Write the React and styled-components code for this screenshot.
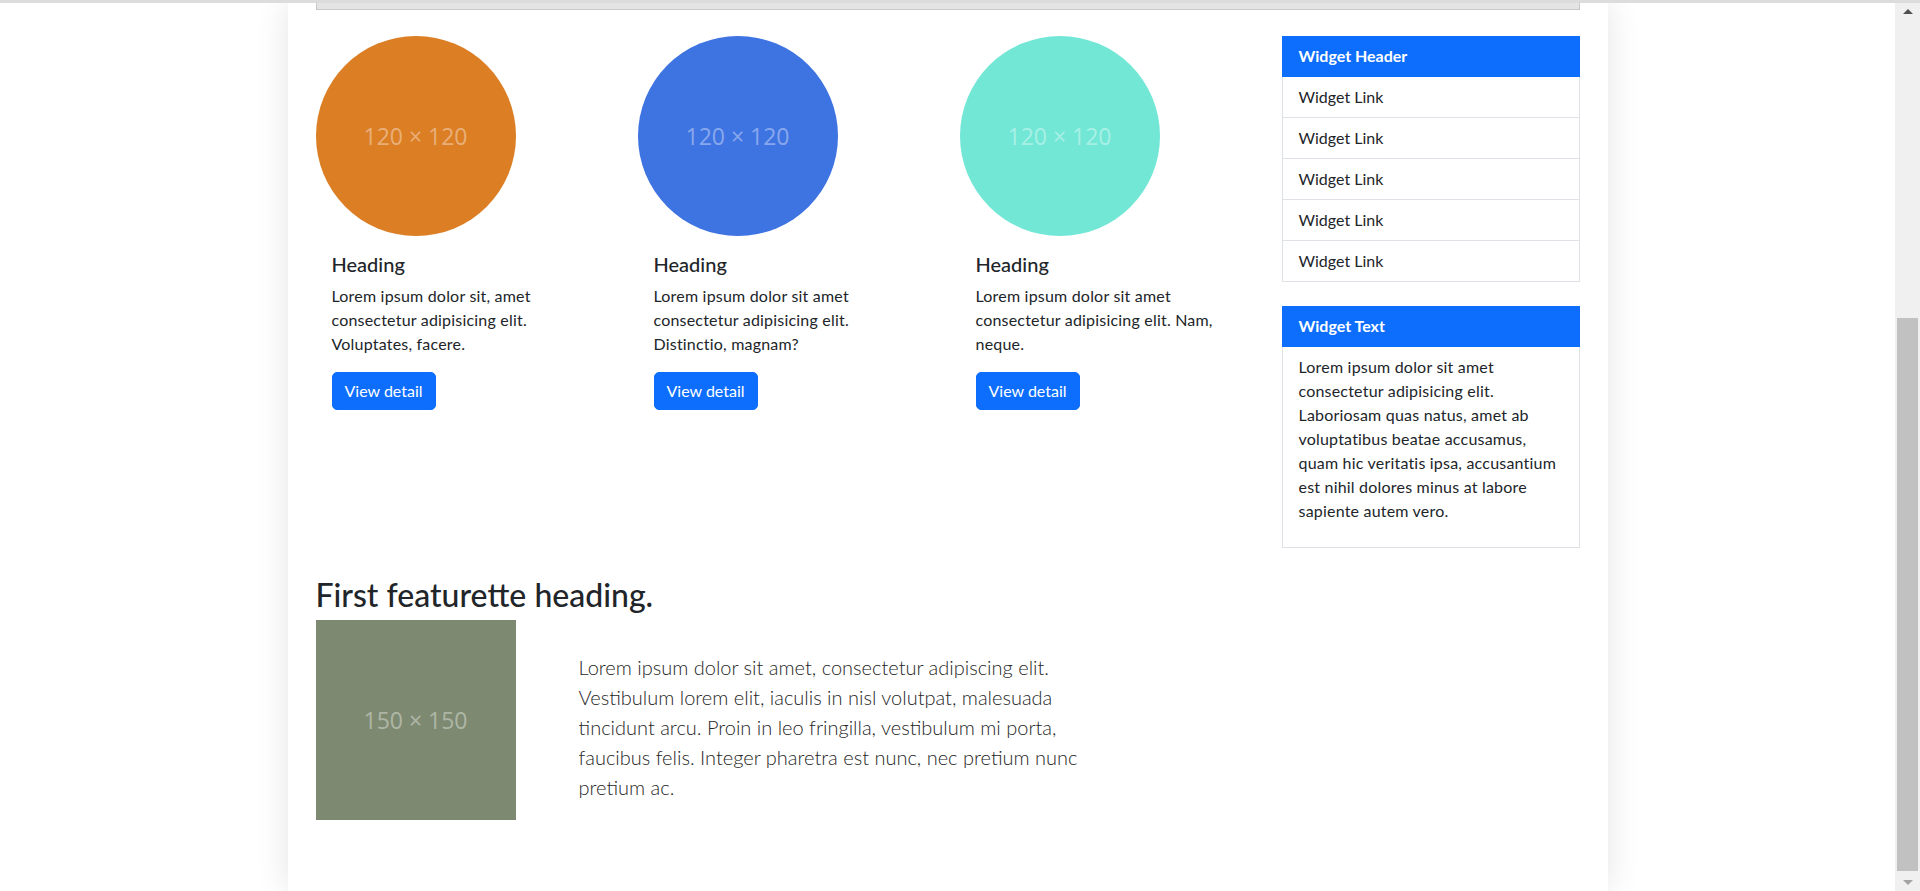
import React from 'react';
import styled, { createGlobalStyle } from 'styled-components';

const GlobalStyle = createGlobalStyle`
  html, body {
    margin: 0;
    height: 100%;
    overflow: hidden;
    background: #fff;
  }
  body {
    font-family: Lato, "Noto Sans", sans-serif;
    color: #212529;
  }
  * {
    box-sizing: border-box;
  }
`;

const Screen = styled.div`
  display: flex;
  flex-direction: column;
  height: 100vh;
`;

const TopEdge = styled.div`
  height: 3px;
  background: #dcdcdc;
  flex-shrink: 0;
`;

const Viewport = styled.div`
  flex: 1;
  min-height: 0;
  display: flex;
`;

const Page = styled.div`
  flex: 1;
  display: flex;
  justify-content: center;
  background: #fff;
  overflow: hidden;
`;

const Container = styled.div`
  width: 1320px;
  padding: 0 28px;
  background: #fff;
  box-shadow: 0 0 32px rgba(0, 0, 0, 0.11);
`;

const JumboEdge = styled.div`
  height: 7px;
  background: #e4e4e4;
  border: 1px solid #c8c8c8;
  border-top: none;
`;

const MainRow = styled.div`
  display: grid;
  grid-template-columns: 942px 298px;
  column-gap: 24px;
  align-items: start;
  margin-top: 26px;
`;

const CardRow = styled.div`
  display: grid;
  grid-template-columns: repeat(3, 298px);
  column-gap: 24px;
`;

const Card = styled.div`
  display: flex;
  flex-direction: column;
`;

const Placeholder = styled.div`
  width: 200px;
  height: 200px;
  border-radius: ${p => (p.$round ? '50%' : '0')};
  background: ${p => p.$bg};
  display: flex;
  align-items: center;
  justify-content: center;
  color: rgba(255, 255, 255, 0.4);
  font-size: 23px;
  font-family: "Open Sans", "Noto Sans", sans-serif;
  font-weight: 400;
`;

const CardBody = styled.div`
  padding: 16px;
`;

const Heading = styled.h5`
  margin: 0 0 8px;
  font-size: 20px;
  font-weight: 500;
  line-height: 1.2;
`;

const Text = styled.p`
  margin: 0 0 16px;
  font-size: 16px;
  line-height: 24px;
  letter-spacing: 0.2px;
`;

const Button = styled.a`
  display: inline-block;
  padding: 6px 12px;
  font-size: 16px;
  line-height: 24px;
  color: #fff;
  background: #0d6efd;
  border: 1px solid #0d6efd;
  border-radius: 5px;
  text-decoration: none;
  cursor: pointer;
`;

const Sidebar = styled.aside`
  display: flex;
  flex-direction: column;
  gap: 24px;
`;

const Widget = styled.div`
  display: flex;
  flex-direction: column;
`;

const WidgetHeader = styled.div`
  padding: 8px 17px 9px;
  line-height: 24px;
  font-size: 16px;
  font-weight: 700;
  color: #fff;
  background: #0d6efd;
`;

const WidgetList = styled.div`
  border: 1px solid #dee2e6;
  border-top: none;
`;

const WidgetLink = styled.a`
  display: block;
  padding: 8px 16px;
  line-height: 24px;
  font-size: 16px;
  color: #212529;
  text-decoration: none;
  & + & {
    border-top: 1px solid #dee2e6;
  }
`;

const WidgetBody = styled.div`
  padding: 8px 16px;
  border: 1px solid #dee2e6;
  border-top: none;
`;

const Featurette = styled.section`
  margin-top: 28px;
`;

const FeaturetteHeading = styled.h2`
  margin: 0 0 6px;
  font-size: 32px;
  font-weight: 500;
  line-height: 1.2;
`;

const FeaturetteRow = styled.div`
  display: flex;
  align-items: flex-start;
  gap: 63px;
`;

const Lead = styled.p`
  margin: 32px 0 0;
  width: 520px;
  font-size: 20px;
  font-weight: 300;
  line-height: 30px;
  color: #262626;
`;

const Scrollbar = styled.div`
  width: 25px;
  flex-shrink: 0;
  background: #f0f0f0;
  display: flex;
  flex-direction: column;
  align-items: center;
`;

const Arrow = styled.div`
  height: 17px;
  display: flex;
  align-items: center;
  justify-content: center;
  &::after {
    content: '';
    width: 0;
    height: 0;
    border-left: 5px solid transparent;
    border-right: 5px solid transparent;
    ${p => (p.$down
      ? 'border-top: 5px solid #a3a3a3;'
      : 'border-bottom: 5px solid #505050;')}
  }
`;

const Track = styled.div`
  flex: 1;
  width: 100%;
  padding: 0 2px;
`;

const Thumb = styled.div`
  margin-top: ${p => p.$offset}px;
  height: ${p => p.$size}px;
  background: #c1c1c1;
`;

const cards = [
  { color: '#db7e24', text: 'Lorem ipsum dolor sit, amet consectetur adipisicing elit. Voluptates, facere.' },
  { color: '#3e73e2', text: 'Lorem ipsum dolor sit amet consectetur adipisicing elit. Distinctio, magnam?' },
  { color: '#72e7d6', text: 'Lorem ipsum dolor sit amet consectetur adipisicing elit. Nam, neque.' },
];

export default function App() {
  return (
    <Screen>
      <GlobalStyle />
      <TopEdge />
      <Viewport>
        <Page>
          <Container>
            <JumboEdge />
            <MainRow>
              <CardRow>
                {cards.map((card, i) => (
                  <Card key={i}>
                    <Placeholder $round $bg={card.color}>120 × 120</Placeholder>
                    <CardBody>
                      <Heading>Heading</Heading>
                      <Text>{card.text}</Text>
                      <Button>View detail</Button>
                    </CardBody>
                  </Card>
                ))}
              </CardRow>
              <Sidebar>
                <Widget>
                  <WidgetHeader>Widget Header</WidgetHeader>
                  <WidgetList>
                    {[1, 2, 3, 4, 5].map(n => (
                      <WidgetLink key={n}>Widget Link</WidgetLink>
                    ))}
                  </WidgetList>
                </Widget>
                <Widget>
                  <WidgetHeader>Widget Text</WidgetHeader>
                  <WidgetBody>
                    <Text>
                      Lorem ipsum dolor sit amet consectetur adipisicing elit. Laboriosam quas
                      natus, amet ab voluptatibus beatae accusamus, quam hic veritatis ipsa,
                      accusantium est nihil dolores minus at labore sapiente autem vero.
                    </Text>
                  </WidgetBody>
                </Widget>
              </Sidebar>
            </MainRow>
            <Featurette>
              <FeaturetteHeading>First featurette heading.</FeaturetteHeading>
              <FeaturetteRow>
                <Placeholder $bg="#7d8970">150 × 150</Placeholder>
                <Lead>
                  Lorem ipsum dolor sit amet, consectetur adipiscing elit. Vestibulum lorem
                  elit, iaculis in nisl volutpat, malesuada tincidunt arcu. Proin in leo
                  fringilla, vestibulum mi porta, faucibus felis. Integer pharetra est nunc,
                  nec pretium nunc pretium ac.
                </Lead>
              </FeaturetteRow>
            </Featurette>
          </Container>
        </Page>
        <Scrollbar>
          <Arrow />
          <Track>
            <Thumb $offset={298} $size={553} />
          </Track>
          <Arrow $down />
        </Scrollbar>
      </Viewport>
    </Screen>
  );
}
